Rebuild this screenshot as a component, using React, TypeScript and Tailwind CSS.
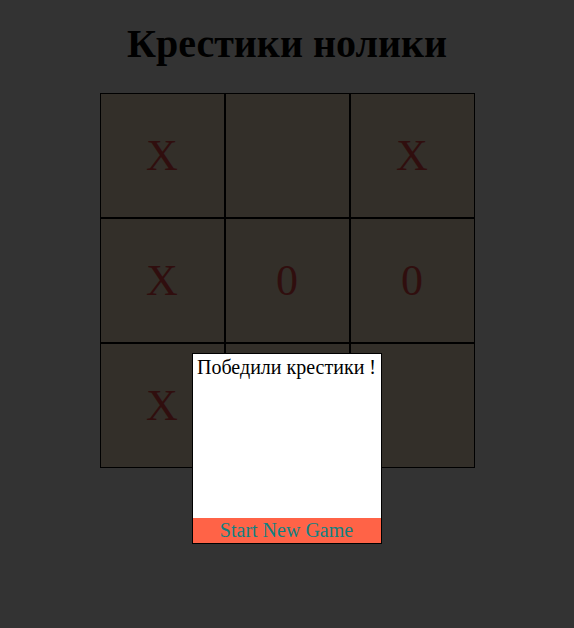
const cells = ['X', '', 'X', 'X', '0', '0', 'X', '', ''];

export default function App() {
  return (
    <div className="min-h-[628px] bg-[#333333] font-['Liberation_Serif',serif]">
      <h1 className="pt-[20px] text-center text-[40px] font-bold leading-[48px] text-black">
        Крестики нолики
      </h1>
      <div className="relative mx-auto mt-[25px] w-[375px]">
        <div className="grid grid-cols-3">
          {cells.map((c, i) => (
            <div
              key={i}
              className="flex h-[125px] w-[125px] items-center justify-center border border-black bg-[#332f29] text-[44px] text-[#300e0e]"
            >
              {c}
            </div>
          ))}
        </div>
        <div className="absolute left-[92px] top-[260px] flex h-[191px] w-[190px] flex-col justify-between border border-black bg-white">
          <p className="pt-[2px] text-center text-[20px] leading-[22px] text-black">
            Победили крестики !
          </p>
          <button className="h-[25px] w-full bg-[#ff6347] text-[20px] leading-[25px] text-[#128080]">
            Start New Game
          </button>
        </div>
      </div>
    </div>
  );
}
